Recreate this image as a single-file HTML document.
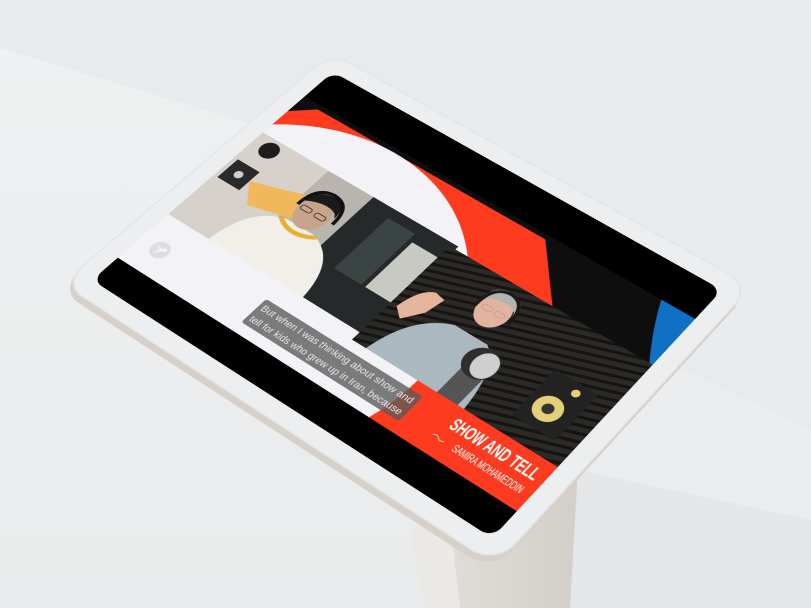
<!DOCTYPE html>
<html><head><meta charset="utf-8"><style>
html,body{margin:0;padding:0;}
body{width:811px;height:608px;overflow:hidden;position:relative;background:linear-gradient(180deg,#e7ebee 0%,#e9ecee 50%,#e6e8e9 100%);font-family:"Liberation Sans",sans-serif;}
#wrap{position:absolute;left:0;top:0;width:811px;height:608px;overflow:hidden;}
.abs{position:absolute;left:0;top:0;}
.t{transform-origin:0 0;}
.M{transform:matrix3d(0.32906,0.19392,0,-0.00008302,-0.35417,0.26704,0,-0.00010749,0,0,1,0,333,72,0,1);}
.side{transform:translate(-3px,6px) matrix3d(0.32906,0.19392,0,-0.00008302,-0.35417,0.26704,0,-0.00010749,0,0,1,0,333,72,0,1);}
</style></head><body>
<div id="wrap">
<svg class="abs" width="811" height="608" viewBox="0 0 811 608">
  <defs>
    <linearGradient id="tbl" x1="0" y1="0" x2="0" y2="1"><stop offset="0" stop-color="#eef0f1"/><stop offset="1" stop-color="#e9ebec"/></linearGradient>
    <linearGradient id="col" x1="0" y1="0" x2="1" y2="0"><stop offset="0" stop-color="#e4e1dd"/><stop offset="1" stop-color="#d3cec8"/></linearGradient>
  </defs>
  <polygon points="0,48 245,122 600,330 811,430 811,608 0,608" fill="url(#tbl)"/>
  <polygon points="410,530 578,470 570,608 425,608" fill="url(#col)"/>
  <polygon points="410,530 450,518 460,608 425,608" fill="#ebe9e6"/>
  <polygon points="578,470 811,520 811,608 570,608" fill="#e4e6e7"/>
</svg>
<div class="abs t side" style="width:1000px;height:700px;">
  <div style="position:absolute;left:-42px;top:-42px;width:1084px;height:784px;border-radius:56px;background:#d6d0c9;"></div>
</div>
<div class="abs t M" style="width:1000px;height:700px;">
  <div style="position:absolute;left:-42px;top:-42px;width:1084px;height:784px;border-radius:56px;background:#eceeef;box-shadow:inset 0 0 0 3px #e2e4e5;"></div>
  <div style="position:absolute;left:0;top:0;width:1000px;height:700px;border-radius:26px;overflow:hidden;background:#000;">
  <svg width="1000" height="700" viewBox="0 0 1000 700" style="display:block">
    <defs>
      <clipPath id="fr"><rect x="0" y="88" width="1000" height="542"/></clipPath>
      <clipPath id="man"><rect x="0" y="215" width="520" height="275"/></clipPath>
      <clipPath id="wom"><rect x="505" y="224" width="495" height="288"/></clipPath>
      <pattern id="foam" width="18" height="18" patternUnits="userSpaceOnUse" patternTransform="rotate(-20)">
        <rect width="18" height="18" fill="#2b2a27"/><rect width="18" height="7" fill="#151412"/>
      </pattern>
    </defs>
    <g clip-path="url(#fr)">
      <rect x="0" y="88" width="1000" height="542" fill="#0e0e0e"/>
      <polygon points="47,100 646,100 1140,630 0,630 0,140" fill="#ff3b1f"/>
      <path d="M920,88 L1000,88 L1000,232 L998,232 Q950,160 920,88 Z" fill="#1070c4"/>
      <circle cx="255" cy="512" r="413" fill="#f2f2f7"/>
      <g clip-path="url(#man)">
        <rect x="0" y="215" width="520" height="275" fill="#b9b5ae"/>
        <rect x="0" y="215" width="180" height="275" fill="#d6d2cb"/>
        <rect x="300" y="215" width="220" height="275" fill="#25292a"/>
        <rect x="360" y="240" width="70" height="160" fill="#3a4442"/>
        <rect x="440" y="260" width="80" height="140" fill="#c9c9c4"/>
        <circle cx="45" cy="245" r="22" fill="#1d1d1d"/>
        <rect x="10" y="300" width="60" height="60" fill="#2a2a2a"/>
        <circle cx="40" cy="330" r="10" fill="#cfcfcf"/>
        <polygon points="70,330 190,290 220,350 110,380" fill="#f0b85a"/>
        <path d="M110,490 Q120,380 200,360 L270,360 Q350,380 360,490 Z" fill="#f2efe9"/>
        <path d="M185,362 Q230,395 280,362" stroke="#e8b030" stroke-width="10" fill="none"/>
        <ellipse cx="232" cy="320" rx="38" ry="44" fill="#c8a48a"/>
        <path d="M192,305 Q200,262 240,262 Q275,265 275,305 L268,295 Q240,280 200,300 Z" fill="#1a1a1a"/>
        <path d="M190,318 Q190,260 235,258 Q282,260 282,318" stroke="#111" stroke-width="8" fill="none"/>
        <rect x="200" y="312" width="26" height="12" rx="5" fill="none" stroke="#333" stroke-width="2"/>
        <rect x="236" y="312" width="26" height="12" rx="5" fill="none" stroke="#333" stroke-width="2"/>
      </g>
      <g clip-path="url(#wom)">
        <rect x="505" y="224" width="495" height="288" fill="url(#foam)"/>
        <path d="M540,512 Q560,400 640,370 L720,370 Q770,400 780,512 Z" fill="#a9b9bf"/>
        <path d="M520,400 Q530,340 560,330 L585,335 L575,380 Q560,400 545,420 Z" fill="#e5b59e"/>
        <ellipse cx="678" cy="300" rx="36" ry="42" fill="#e2b4a0"/>
        <path d="M640,300 Q635,245 680,245 Q725,248 720,300 L712,280 Q690,262 650,282 Z" fill="#b3b3b0"/>
        <rect x="652" y="295" width="22" height="12" rx="5" fill="none" stroke="#c99" stroke-width="2"/>
        <rect x="682" y="295" width="22" height="12" rx="5" fill="none" stroke="#c99" stroke-width="2"/>
        <path d="M640,310 Q638,250 680,248 Q722,250 720,310" stroke="#1a1a1a" stroke-width="7" fill="none"/>
        <rect x="715" y="420" width="50" height="92" fill="#555"/>
        <circle cx="739" cy="412" r="38" fill="#2e2e2e"/>
        <ellipse cx="748" cy="412" rx="26" ry="32" fill="#cfcfcf"/>
        <rect x="860" y="340" width="100" height="130" rx="6" fill="#222"/>
        <circle cx="905" cy="420" r="30" fill="#e5cf78"/>
        <circle cx="905" cy="420" r="12" fill="#333"/>
        <circle cx="925" cy="362" r="9" fill="#e5cf78"/>
      </g>
      <circle cx="53" cy="567" r="21" fill="#dcdce2"/>
      <path d="M38,560 L50,566 L46,582 L56,570 L68,562 L60,556 L54,562 Z" fill="#f2f2f7"/>
      <rect x="306" y="535" width="395" height="70" rx="6" fill="rgba(90,90,90,0.78)"/>
      <text x="314" y="562" font-size="23" fill="#e6e6e6" font-family="Liberation Sans, sans-serif" textLength="378" lengthAdjust="spacingAndGlyphs">But when I was thinking about show and</text>
      <text x="314" y="594" font-size="23" fill="#e6e6e6" font-family="Liberation Sans, sans-serif" textLength="378" lengthAdjust="spacingAndGlyphs">tell for kids who grew up in Iran, because</text>
      <text x="783" y="562" font-size="40" font-weight="bold" fill="#fff" font-family="Liberation Sans Narrow, Liberation Sans, sans-serif" textLength="200" lengthAdjust="spacingAndGlyphs">SHOW AND TELL</text>
      <text x="820" y="598" font-size="24" fill="#fff" font-family="Liberation Sans Narrow, Liberation Sans, sans-serif" textLength="160" lengthAdjust="spacingAndGlyphs">SAMIRA MOHAMEDDIN</text>
      <path d="M770,590 q8,-6 14,0 t14,0" stroke="#fff" stroke-width="1.5" fill="none"/>
    </g>
  </svg>
  </div>
</div>
</div>
</body></html>
